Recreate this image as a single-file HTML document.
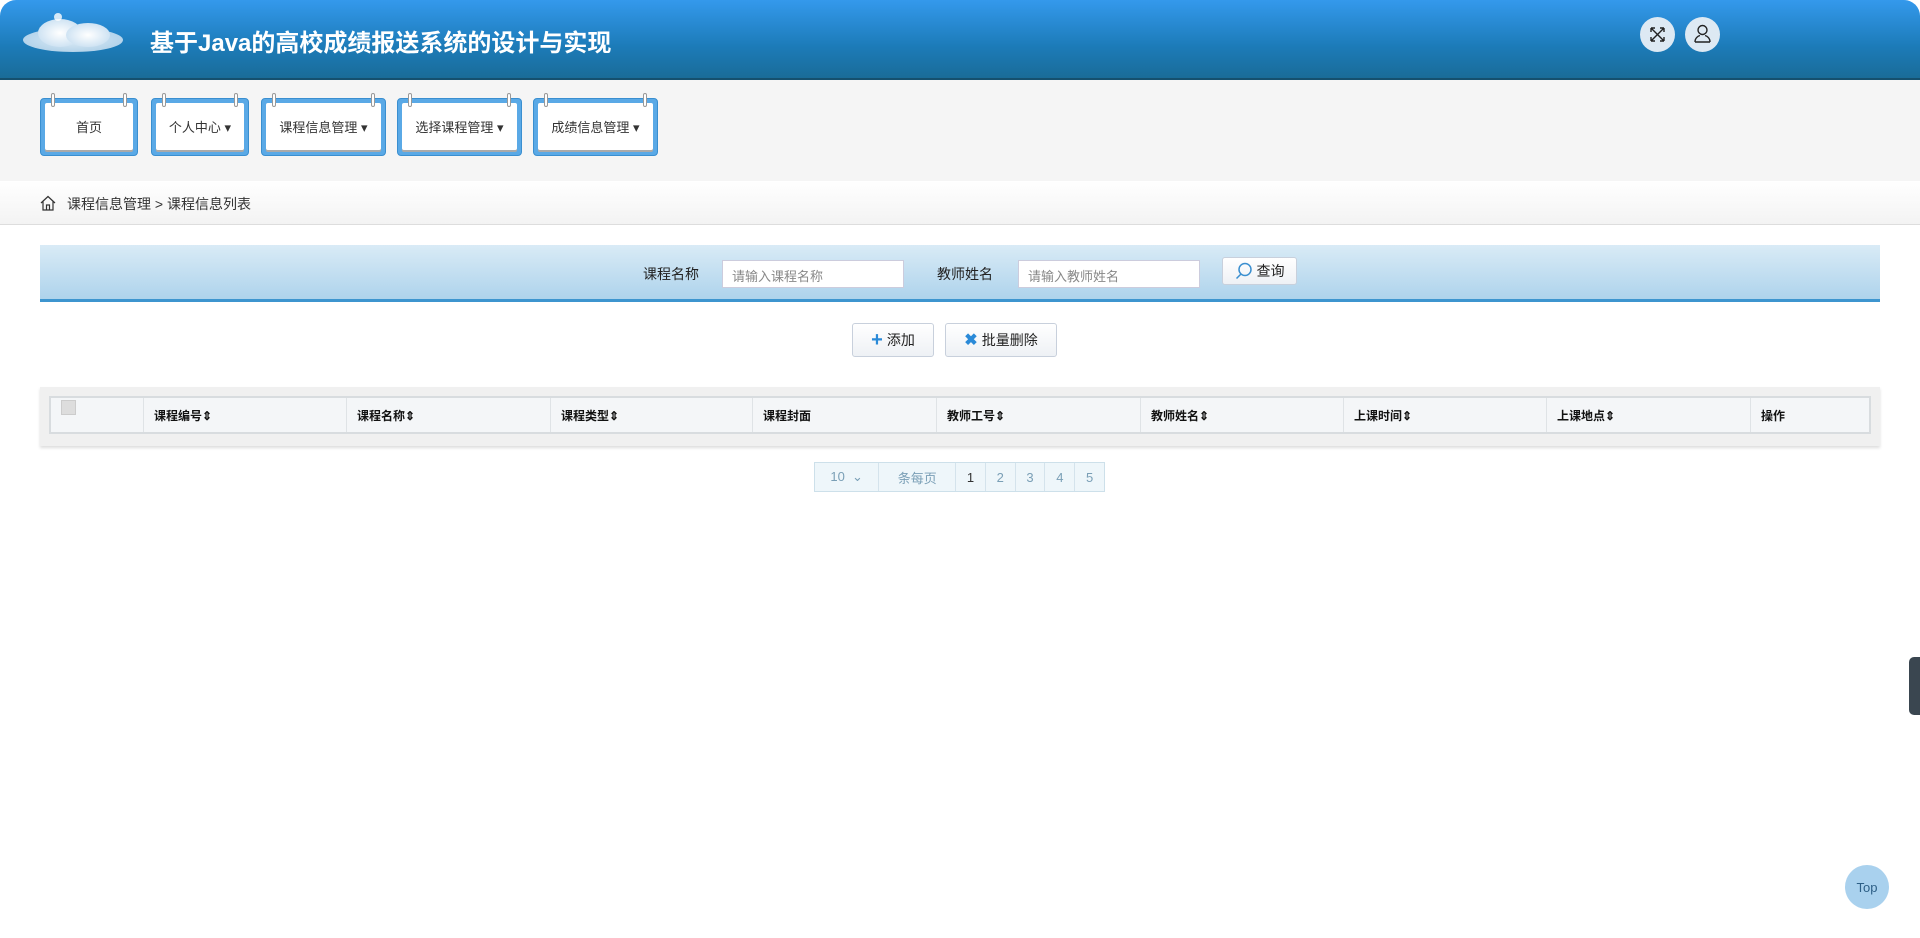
<!DOCTYPE html>
<html><head><meta charset="utf-8"><style>
*{box-sizing:border-box;margin:0;padding:0}
body{width:1920px;height:938px;background:#fff;font-family:"Liberation Sans","Noto Sans CJK SC",sans-serif;font-size:13px;color:#333;position:relative;overflow:hidden}
.hd{position:absolute;left:0;top:0;width:1920px;height:80px;background:linear-gradient(#3499ec,#1c7bb8 60%,#1a6c98);border-radius:16px 16px 0 0;border-bottom:2px solid #15506e}
.cloud{position:absolute;left:18px;top:8px;width:110px;height:50px}
.title{position:absolute;left:150px;top:23px;color:#fff;font-size:24px;font-weight:bold}
.ic{position:absolute;top:17px;width:35px;height:35px;border-radius:50%;background:#dde9f3}
.nav{position:absolute;left:0;top:80px;width:1920px;height:101px;background:#f5f5f5}
.tab{position:absolute;top:18px;height:58px;background:#5aa9e6;border-radius:4px;padding:4px 4px 5px 4px;border:1px solid #3a8fd0}
.tab div{width:100%;height:100%;background:#fff;border-radius:2px;display:flex;align-items:center;justify-content:center;font-size:13px;color:#333;box-shadow:0 2px 0 #aaa}
.ring{position:absolute;top:-6px;width:4px;height:14px;border:1px solid #999;background:#fff;border-radius:2px}
.bc{position:absolute;left:0;top:181px;width:1920px;height:44px;background:linear-gradient(#fff,#f3f3f3);border-bottom:1px solid #ddd;font-size:14px;color:#333}
.sb{position:absolute;left:40px;top:245px;width:1840px;height:57px;background:linear-gradient(#d9ebf6,#aed3ec);border-bottom:3px solid #3d95cf}
.lab{position:absolute;top:19px;font-size:14px;color:#222}
.inp{position:absolute;top:15px;width:182px;height:28px;background:#fff;border:1px solid #ccd;font-size:13px;color:#888;padding:5px 9px}
.btn{position:absolute;background:linear-gradient(#fff,#eef1f5);border:1px solid #c8d0dc;border-radius:3px;font-size:14px;color:#222;display:flex;align-items:center;justify-content:center;gap:4px}
.tw{position:absolute;left:40px;top:387px;width:1840px;height:59px;background:#f0f0f0;box-shadow:0 2px 3px #ddd}
.th{position:absolute;left:9px;top:9px;width:1822px;height:38px;background:#f4f6f8;border:2px solid #d8dcdf;display:flex}
.th div{border-right:1px solid #dfe3e6;font-size:12px;font-weight:bold;color:#111;padding:0 10px;height:100%;display:flex;align-items:center}
.pg{position:absolute;left:814px;top:462px;width:291px;height:30px;display:flex;border:1px solid #cde0ea;background:#eef6fa;color:#7a9fb6;font-size:13px}
.pg div{display:flex;align-items:center;justify-content:center;border-left:1px solid #d4e3ec;width:31px}
</style></head><body>
<div class="hd">
<svg class="cloud" viewBox="0 0 110 50"><defs><radialGradient id="g"><stop offset="0" stop-color="#fff"/><stop offset="1" stop-color="#cfe3f3"/></radialGradient></defs><ellipse cx="55" cy="32" rx="50" ry="12" fill="url(#g)" opacity=".85"/><ellipse cx="42" cy="25" rx="22" ry="14" fill="url(#g)"/><ellipse cx="70" cy="27" rx="22" ry="12" fill="url(#g)"/><circle cx="40" cy="9" r="4" fill="#fff" opacity=".8"/></svg>
<div class="title">基于Java的高校成绩报送系统的设计与实现</div>
<div class="ic" style="left:1640px"><svg width="35" height="35" viewBox="0 0 35 35" fill="none" stroke="#222" stroke-width="1.4"><path d="M11 11L24 24M24 11L11 24M11 11h4M11 11v4M24 11h-4M24 11v4M11 24h4M11 24v-4M24 24h-4M24 24v-4"/></svg></div>
<div class="ic" style="left:1685px"><svg width="35" height="35" viewBox="0 0 35 35" fill="none" stroke="#222" stroke-width="1.4"><circle cx="17.5" cy="13" r="4.5"/><path d="M10 25c0-4 3-6 5-6.5M25 25c0-4-3-6-5-6.5M10 25h15"/></svg></div>
</div>
<div class="nav">
<div class="tab" style="left:40px;width:98px"><i class="ring" style="left:10px"></i><i class="ring" style="right:10px"></i><div>首页</div></div>
<div class="tab" style="left:151px;width:98px"><i class="ring" style="left:10px"></i><i class="ring" style="right:10px"></i><div>个人中心 ▾</div></div>
<div class="tab" style="left:261px;width:125px"><i class="ring" style="left:10px"></i><i class="ring" style="right:10px"></i><div>课程信息管理 ▾</div></div>
<div class="tab" style="left:397px;width:125px"><i class="ring" style="left:10px"></i><i class="ring" style="right:10px"></i><div>选择课程管理 ▾</div></div>
<div class="tab" style="left:533px;width:125px"><i class="ring" style="left:10px"></i><i class="ring" style="right:10px"></i><div>成绩信息管理 ▾</div></div>
</div>
<div class="bc"><svg style="position:absolute;left:40px;top:14px" width="16" height="16" viewBox="0 0 16 16" fill="none" stroke="#333" stroke-width="1.2"><path d="M1 8L8 1.5 15 8M3 6.5V15h10V6.5M6.5 15v-5h3v5"/></svg><span style="position:absolute;left:67px;top:13px">课程信息管理 &gt; 课程信息列表</span></div>
<div class="sb">
<span class="lab" style="left:603px">课程名称</span><div class="inp" style="left:682px">请输入课程名称</div>
<span class="lab" style="left:897px">教师姓名</span><div class="inp" style="left:978px">请输入教师姓名</div>
<div class="btn" style="left:1182px;top:12px;width:75px;height:28px"><svg width="18" height="18" viewBox="0 0 18 18" fill="none" stroke="#3a8fd0" stroke-width="1.5"><circle cx="10" cy="7.5" r="6"/><path d="M6 12L1.5 16.5"/></svg>查询</div>
</div>
<div class="btn" style="left:852px;top:323px;width:82px;height:34px"><b style="color:#2a8ad8;font-size:20px">+</b>添加</div>
<div class="btn" style="left:945px;top:323px;width:112px;height:34px"><b style="color:#2a8ad8;font-size:16px">✖</b>批量删除</div>
<div class="tw"><div class="th">
<div style="width:93px;align-items:flex-start;padding-top:2px"><span style="display:inline-block;width:15px;height:15px;background:#ddd;border:1px solid #ccc"></span></div>
<div style="width:203px">课程编号⇕</div><div style="width:204px">课程名称⇕</div><div style="width:202px">课程类型⇕</div><div style="width:184px">课程封面</div><div style="width:204px">教师工号⇕</div><div style="width:203px">教师姓名⇕</div><div style="width:203px">上课时间⇕</div><div style="width:204px">上课地点⇕</div><div style="border:none">操作</div>
</div></div>
<div class="pg"><div style="width:66px;border:none">10 &nbsp;⌄</div><div style="width:80px">条每页</div><div style="color:#333">1</div><div>2</div><div>3</div><div>4</div><div>5</div></div>
<div style="position:absolute;left:1909px;top:657px;width:11px;height:58px;background:#3a4650;border-radius:5px 0 0 5px"></div>
<div style="position:absolute;left:1845px;top:865px;width:44px;height:44px;border-radius:50%;background:#a9d1ee;color:#2d5f86;font-size:13px;display:flex;align-items:center;justify-content:center">Top</div>
</body></html>
